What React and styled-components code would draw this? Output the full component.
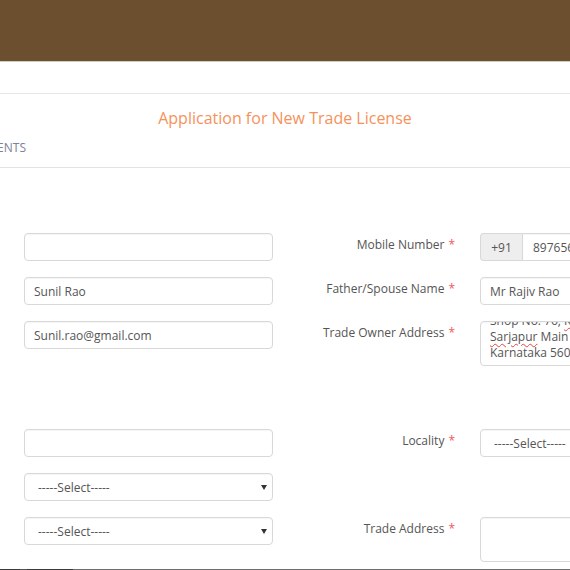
import React from "react";
import styled, { createGlobalStyle } from "styled-components";

const GlobalStyle = createGlobalStyle`
  html, body {
    margin: 0;
    padding: 0;
    background: #fff;
    overflow: hidden;
  }
  body {
    font-family: "Open Sans", "Liberation Sans", sans-serif;
    -webkit-font-smoothing: antialiased;
  }
  * { box-sizing: border-box; }
`;

const Page = styled.div`
  display: flex;
  flex-direction: column;
  width: 570px;
  height: 570px;
  overflow: hidden;
`;

const Header = styled.header`
  height: 62px;
  flex: none;
  background: #6b4f2e;
  border-bottom: 1px solid #d6ccbd;
`;

const Panel = styled.section`
  margin-top: 31px;
  border-top: 1px solid #ebe6e8;
`;

const TitleBlock = styled.div`
  padding: 13px 0 11px;
  border-bottom: 1px solid #e4e4e4;
`;

const Title = styled.h1`
  margin: 0;
  width: 570px;
  text-align: center;
  font-size: 16px;
  line-height: 23px;
  font-weight: 400;
  color: #f5925c;
`;

const Tabs = styled.nav`
  display: flex;
  justify-content: flex-end;
  width: 26px;
  margin-top: 9px;
  white-space: nowrap;
`;

const Tab = styled.span`
  font-size: 12px;
  line-height: 17px;
  text-transform: uppercase;
  color: #7b8299;
`;

const Form = styled.div`
  padding: 65px 0 0 24px;
  display: flex;
  flex-direction: column;
`;

const Group = styled.div`
  display: grid;
  grid-template-columns: 249px 207px 249px;
  row-gap: 16px;
  align-items: start;
  margin-top: ${(p) => p.$top || 0}px;
`;

const Label = styled.label`
  text-align: right;
  padding: 3px 25px 0 0;
  font-size: 12px;
  line-height: 17px;
  color: #555;
  white-space: nowrap;
`;

const Req = styled.span`
  color: #f0585c;
  margin-left: 4px;
`;

const fieldBase = `
  height: 28px;
  border: 1px solid #d8d8d8;
  border-radius: 4px;
  background: #fff;
  font-family: "Open Sans", "Liberation Sans", sans-serif;
  font-size: 12px;
  color: #555;
  box-shadow: inset 0 1px 1px rgba(0, 0, 0, 0.04);
`;

const Input = styled.input`
  ${fieldBase}
  width: 249px;
  padding: 0 9px;
  outline: none;
  display: block;
`;

const InputGroup = styled.div`
  display: flex;
  width: 249px;
`;

const Addon = styled.span`
  ${fieldBase}
  flex: none;
  width: 42px;
  display: flex;
  align-items: center;
  justify-content: center;
  background: #eee;
  border-right: none;
  border-radius: 4px 0 0 4px;
  box-shadow: none;
`;

const GroupInput = styled(Input)`
  flex: 1;
  width: auto;
  min-width: 0;
  padding-left: 10px;
  border-radius: 0 4px 4px 0;
`;

const Select = styled.div`
  ${fieldBase}
  width: 249px;
  display: flex;
  align-items: center;
  justify-content: space-between;
  padding: 0 5px 0 13px;
  line-height: 17px;
`;

const Caret = styled.svg`
  width: 6px;
  height: 5px;
  fill: #333;
`;

const TextArea = styled.div`
  ${fieldBase}
  width: 249px;
  height: 45px;
  padding: 0 9px;
  overflow: hidden;
  line-height: 16px;
  white-space: nowrap;
`;

const AreaText = styled.div`
  margin-top: -9px;
`;

const Typo = styled.span`
  text-decoration: underline wavy #e2463f;
  text-decoration-thickness: 1px;
  text-underline-offset: 2px;
`;

const ScrollBar = styled.div`
  margin-top: auto;
  display: flex;
  height: 1px;
  flex: none;
  background: #6e6e6e;
`;

const ScrollPart = styled.div`
  width: ${(p) => p.$w}px;
  background: ${(p) => p.$c};
`;

const Required = ({ children }) => (
  <Label>
    {children}
    <Req>*</Req>
  </Label>
);

const SelectBox = ({ children }) => (
  <Select>
    <span>{children}</span>
    <Caret viewBox="0 0 6 5">
      <polygon points="0,0 6,0 3,5" />
    </Caret>
  </Select>
);

export default function App() {
  return (
    <>
      <GlobalStyle />
      <Page>
        <Header />
        <Panel>
          <TitleBlock>
            <Title>Application for New Trade License</Title>
            <Tabs>
              <Tab>Documents</Tab>
            </Tabs>
          </TitleBlock>
          <Form>
            <Group>
              <Input readOnly defaultValue="" />
              <Required>Mobile Number</Required>
              <InputGroup>
                <Addon>+91</Addon>
                <GroupInput readOnly defaultValue="8976565412" />
              </InputGroup>

              <Input readOnly defaultValue="Sunil Rao" />
              <Required>Father/Spouse Name</Required>
              <Input readOnly defaultValue="Mr Rajiv Rao" />

              <Input readOnly defaultValue="Sunil.rao@gmail.com" />
              <Required>Trade Owner Address</Required>
              <TextArea>
                <AreaText>
                  <div>
                    Shop No. 76, <Typo>Kodathi</Typo> Village,
                  </div>
                  <div>
                    <Typo>Sarjapur</Typo> Main Road, Bengaluru,
                  </div>
                  <div>Karnataka 560035</div>
                </AreaText>
              </TextArea>
            </Group>

            <Group $top={63}>
              <Input readOnly defaultValue="" />
              <Required>Locality</Required>
              <SelectBox>-----Select-----</SelectBox>

              <SelectBox>-----Select-----</SelectBox>
              <span />
              <span />

              <SelectBox>-----Select-----</SelectBox>
              <Required>Trade Address</Required>
              <TextArea />
            </Group>
          </Form>
        </Panel>
        <ScrollBar>
          <ScrollPart $w={20} $c="#3a3a3a" />
          <ScrollPart $w={7} $c="#555" />
          <ScrollPart $w={46} $c="#3a3a3a" />
        </ScrollBar>
      </Page>
    </>
  );
}
